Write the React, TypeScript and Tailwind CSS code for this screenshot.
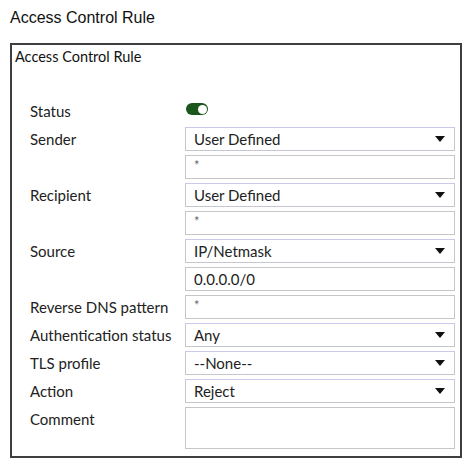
import React from "react";

const lato = { fontFamily: "Lato, 'Noto Sans', sans-serif" } as const;

function Arrow() {
  return (
    <svg width="10" height="6" viewBox="0 0 10 6" className="shrink-0">
      <polygon points="0,0 10,0 5,6" fill="#111" />
    </svg>
  );
}

function Select({ value }: { value: string }) {
  return (
    <div className="h-[24px] w-full border border-[#c6c6cf] border-t-[#c9c9ea] bg-white flex items-center justify-between pl-[8px] pr-[9px] text-[15px] text-[#222] leading-none">
      <span>{value}</span>
      <Arrow />
    </div>
  );
}

function Input({ value, star }: { value?: string; star?: boolean }) {
  return (
    <div className="h-[24px] w-full border border-[#c6c6c6] bg-white flex items-center pl-[8px] text-[15px] text-[#222] leading-none">
      {star ? <span className="text-[13px] text-[#666] -mt-[3px]">*</span> : <span>{value}</span>}
    </div>
  );
}

function Row({ label, children }: { label?: string; children: React.ReactNode }) {
  return (
    <div className="flex">
      <div className="w-[155px] shrink-0 h-[24px] flex items-center text-[15px] text-[#222] leading-none">
        {label}
      </div>
      <div className="w-[270px]">{children}</div>
    </div>
  );
}

export default function App() {
  return (
    <div className="w-[467px] h-[462px] bg-white relative">
      <div
        className="pl-[10px] pt-[9px] h-[43px] text-[16px] text-[#111] leading-[18px]"
        style={{ fontFamily: "'Liberation Sans', Arial, sans-serif" }}
      >
        Access Control Rule
      </div>
      <div
        className="ml-[10px] w-[452px] h-[415px] border-2 border-[#3f3f3f] bg-white"
        style={lato}
      >
        <div className="pl-[3px] pt-[2px] h-[54px] text-[14.5px] leading-[20px] text-[#111]">
          Access Control Rule
        </div>
        <div className="pl-[18px] flex flex-col gap-[4px]">
          <div className="flex">
            <div className="w-[155px] shrink-0 h-[24px] flex items-center text-[15px] text-[#222] leading-none">
              Status
            </div>
            <div className="h-[24px] pt-[4px] pl-[1px]">
              <div className="w-[22px] h-[12px] rounded-full bg-[#1b561d] relative">
                <div className="absolute right-[1.5px] top-[1.5px] w-[9px] h-[9px] rounded-full bg-white" />
              </div>
            </div>
          </div>
          <Row label="Sender">
            <Select value="User Defined" />
          </Row>
          <Row>
            <Input star />
          </Row>
          <Row label="Recipient">
            <Select value="User Defined" />
          </Row>
          <Row>
            <Input star />
          </Row>
          <Row label="Source">
            <Select value="IP/Netmask" />
          </Row>
          <Row>
            <Input value="0.0.0.0/0" />
          </Row>
          <Row label="Reverse DNS pattern">
            <Input star />
          </Row>
          <Row label="Authentication status">
            <Select value="Any" />
          </Row>
          <Row label="TLS profile">
            <Select value="--None--" />
          </Row>
          <Row label="Action">
            <Select value="Reject" />
          </Row>
          <Row label="Comment">
            <div className="h-[42px] w-full border border-[#c6c6c6] bg-white" />
          </Row>
        </div>
      </div>
    </div>
  );
}
